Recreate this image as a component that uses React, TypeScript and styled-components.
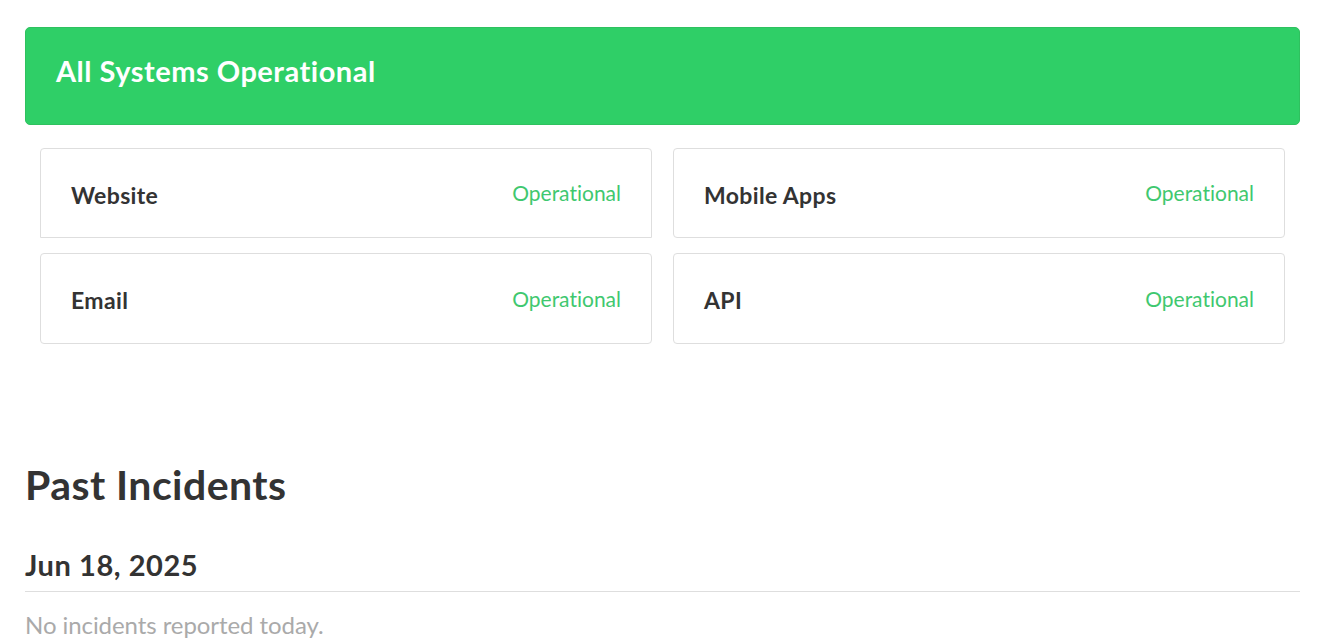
import styled, { createGlobalStyle } from "styled-components";

const GlobalStyle = createGlobalStyle`
  html, body {
    margin: 0;
    padding: 0;
    background: #ffffff;
    overflow: hidden;
  }

  body {
    font-family: "Lato", "Liberation Sans", sans-serif;
    font-variant-ligatures: none;
    color: #333333;
  }
`;

const Page = styled.div`
  padding: 27px 25px 0;
`;

const Banner = styled.div`
  display: flex;
  align-items: center;

  height: 98px;
  box-sizing: border-box;
  padding: 0 30px 12px;
  border: 1px solid #2fc15f;
  border-radius: 5px;

  background-color: #2fcf67;
  color: #ffffff;

  font-size: 29px;
  font-weight: 700;
  letter-spacing: 0.5px;
`;

const Components = styled.div`
  display: grid;
  grid-template-columns: 612px 612px;
  grid-template-rows: 90px 91px;
  column-gap: 21px;
  row-gap: 15px;

  margin: 23px 0 0 15px;
`;

const Card = styled.div<{ $squareBottom?: boolean }>`
  display: flex;
  justify-content: space-between;
  align-items: center;

  box-sizing: border-box;
  padding: 0 30px;
  border: 1px solid #dedede;
  border-radius: ${(p) => (p.$squareBottom ? "4px 4px 0 0" : "4px")};
`;

const Name = styled.div`
  margin-top: 3px;

  font-size: 23px;
  font-weight: 700;
  letter-spacing: 0.35px;
`;

const Status = styled.div`
  margin-top: -1px;

  color: #3fc86f;

  font-size: 21px;
`;

const SectionTitle = styled.h2`
  margin: 116px 0 0;

  font-size: 41px;
  line-height: 50px;
  font-weight: 700;
  letter-spacing: 0.45px;
`;

const DayTitle = styled.h3`
  margin: 37px 0 0;
  padding-bottom: 8px;
  border-bottom: 1px solid #dedede;

  font-size: 29px;
  line-height: 36px;
  font-weight: 700;
  letter-spacing: 0.55px;
`;

const Empty = styled.p`
  margin: 16px 0 0;

  color: #aaaaaa;

  font-size: 24px;
  line-height: 34px;
  letter-spacing: -0.07px;
`;

const components = [
  { name: "Website", squareBottom: true },
  { name: "Mobile Apps" },
  { name: "Email" },
  { name: "API" },
];

export default function App() {
  return (
    <Page>
      <GlobalStyle />
      <Banner>All Systems Operational</Banner>
      <Components>
        {components.map((c) => (
          <Card key={c.name} $squareBottom={c.squareBottom}>
            <Name>{c.name}</Name>
            <Status>Operational</Status>
          </Card>
        ))}
      </Components>
      <SectionTitle>Past Incidents</SectionTitle>
      <DayTitle>Jun 18, 2025</DayTitle>
      <Empty>No incidents reported today.</Empty>
    </Page>
  );
}
